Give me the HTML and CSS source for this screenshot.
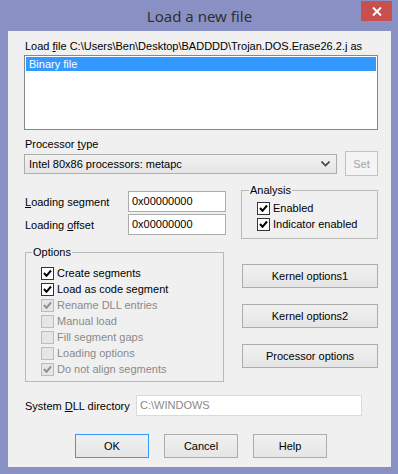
FILE: index.html
```html
<!DOCTYPE html>
<html lang="en">
<head>
    <meta charset="UTF-8">
    <title>Load a new file</title>
    <link rel="stylesheet" href="styles.css">
</head>
<body>
    <div class="window">
        <div class="titlebar">
            <span class="title">Load a new file</span>
            <div class="close-button">
                <svg width="10" height="9" viewBox="0 0 10 9"><path d="M1 0.5 L9 8.5 M9 0.5 L1 8.5" stroke="#fff" stroke-width="2"/></svg>
            </div>
        </div>
        <div class="client">
            <div class="caption">Load <u>f</u>ile C:\Users\Ben\Desktop\BADDDD\Trojan.DOS.Erase26.2.j as</div>
            <div class="listbox">
                <div class="list-item selected">Binary file</div>
            </div>

            <div class="caption proc-label">Processor <u>t</u>ype</div>
            <div class="proc-row">
                <div class="combo">
                    <span>Intel 80x86 processors: metapc</span>
                    <svg width="9" height="6" viewBox="0 0 9 6"><path d="M0.5 0.5 L4.5 4.5 L8.5 0.5" fill="none" stroke="#444" stroke-width="1.6"/></svg>
                </div>
                <button class="btn btn-small" disabled>Set</button>
            </div>

            <div class="middle">
                <div class="left-col">
                    <div class="field-row">
                        <span class="field-label"><u>L</u>oading segment</span>
                        <div class="textbox">0x00000000</div>
                    </div>
                    <div class="field-row">
                        <span class="field-label">Loading <u>o</u>ffset</span>
                        <div class="textbox">0x00000000</div>
                    </div>

                    <fieldset class="group options">
                        <legend>Options</legend>
                        <div class="check"><span class="box on"></span>Create segments</div>
                        <div class="check"><span class="box on"></span>Load as code segment</div>
                        <div class="check disabled"><span class="box on"></span>Rename DLL entries</div>
                        <div class="check disabled"><span class="box"></span>Manual load</div>
                        <div class="check disabled"><span class="box"></span>Fill segment gaps</div>
                        <div class="check disabled"><span class="box"></span>Loading options</div>
                        <div class="check disabled"><span class="box on"></span>Do not align segments</div>
                    </fieldset>
                </div>

                <div class="right-col">
                    <fieldset class="group analysis">
                        <legend>Analysis</legend>
                        <div class="check"><span class="box on"></span>Enabled</div>
                        <div class="check"><span class="box on"></span>Indicator enabled</div>
                    </fieldset>
                    <button class="btn btn-side">Kernel options1</button>
                    <button class="btn btn-side">Kernel options2</button>
                    <button class="btn btn-side">Processor options</button>
                </div>
            </div>

            <div class="dll-row">
                <span class="field-label">System <u>D</u>LL directory</span>
                <div class="textbox readonly">C:\WINDOWS</div>
            </div>

            <div class="button-row">
                <button class="btn btn-main default">OK</button>
                <button class="btn btn-main">Cancel</button>
                <button class="btn btn-main">Help</button>
            </div>
        </div>
    </div>
</body>
</html>
```

FILE: styles.css
```css
body {
    margin: 0;
    font-family: "Liberation Sans", Arial, sans-serif;
    font-size: 11px;
    color: #000;
}
u {
    text-decoration: underline;
    text-underline-offset: 1px;
}
.window {
    width: 398px;
    height: 474px;
    box-sizing: border-box;
    background: #8991c4;
    padding: 0 7px 7px 8px;
    display: flex;
    flex-direction: column;
    position: relative;
}
.titlebar {
    height: 31px;
    flex-shrink: 0;
    display: flex;
    align-items: center;
    justify-content: center;
}
.title {
    font-family: "Noto Sans", "Open Sans", sans-serif;
    font-size: 15px;
    color: #303030;
    margin-top: 1px;
}
.close-button {
    position: absolute;
    top: 1px;
    right: 6px;
    width: 31px;
    height: 20px;
    background: #c7504f;
    display: flex;
    align-items: center;
    justify-content: center;
}
.client {
    flex: 1;
    background: #f0f0f0;
    padding: 8px 13px 0 16px;
    box-sizing: border-box;
}
.caption {
    line-height: 14px;
    padding-left: 1px;
    white-space: nowrap;
}
.listbox {
    margin-top: 2px;
    height: 71px;
    border: 1px solid #828790;
    background: #fff;
    padding: 1px;
}
.list-item {
    height: 14px;
    line-height: 14px;
    padding-left: 3px;
}
.list-item.selected {
    background: #3399ff;
    color: #fff;
}
.proc-label {
    margin-top: 8px;
    line-height: 13px;
}
.proc-row {
    display: flex;
    align-items: center;
    height: 25px;
}
.combo {
    width: 314px;
    height: 20px;
    box-sizing: border-box;
    border: 1px solid #acacac;
    background: linear-gradient(#f2f2f2, #e5e5e5);
    display: flex;
    align-items: center;
    justify-content: space-between;
    padding: 0 6px 0 4px;
}
.btn {
    font-family: "Liberation Sans", Arial, sans-serif;
    font-size: 11px;
    color: #000;
    border: 1px solid #acacac;
    background: linear-gradient(#f0f0f0, #e5e5e5);
    box-sizing: border-box;
    padding: 0;
    margin: 0;
}
.btn:disabled {
    color: #a3a3a3;
    border-color: #c3c3c3;
    background: #f4f4f4;
}
.btn-small {
    width: 33px;
    height: 25px;
    margin-left: 8px;
}
.middle {
    display: flex;
    gap: 15px;
    margin-top: 8px;
}
.left-col {
    width: 202px;
}
.right-col {
    width: 137px;
    display: flex;
    flex-direction: column;
}
.field-row {
    display: flex;
    align-items: center;
    justify-content: space-between;
    margin-top: 2px;
    padding-left: 1px;
}
.field-row:first-child {
    margin-top: 7px;
}
.textbox {
    width: 98px;
    height: 21px;
    box-sizing: border-box;
    border: 1px solid #acacac;
    background: #fff;
    line-height: 19px;
    padding-left: 3px;
}
.group {
    border: 1px solid #b9b9b9;
    margin: 0;
    padding: 0;
}
.group legend {
    padding: 0 1px;
    line-height: 12px;
}
.options {
    margin: 11px 0 0 1px;
    width: 199px;
    box-sizing: border-box;
    padding: 7px 0 0 6px;
    height: 136px;
}
.options .check {
    margin-left: 9px;
}
.analysis {
    height: 55px;
    box-sizing: border-box;
    padding: 4px 0 0 7px;
}
.analysis .check {
    margin-left: 8px;
}
.check {
    display: flex;
    align-items: center;
    height: 16px;
    gap: 3px;
    white-space: nowrap;
}
.box {
    width: 13px;
    height: 13px;
    box-sizing: border-box;
    border: 1px solid #333;
    background: #fff;
    flex-shrink: 0;
}
.box.on {
    background: #fff url("data:image/svg+xml;utf8,<svg xmlns='http://www.w3.org/2000/svg' width='11' height='11'><path d='M2 5 L4.5 7.8 L9 2.5' fill='none' stroke='black' stroke-width='2'/></svg>") no-repeat center;
}
.disabled {
    color: #8a8a8a;
}
.disabled .box {
    border-color: #bcbcbc;
    background-color: #e6e6e6;
}
.disabled .box.on {
    background: #e6e6e6 url("data:image/svg+xml;utf8,<svg xmlns='http://www.w3.org/2000/svg' width='11' height='11'><path d='M2 5 L4.5 7.8 L9 2.5' fill='none' stroke='%23909090' stroke-width='2'/></svg>") no-repeat center;
}
.btn-side {
    width: 136px;
    height: 24px;
    margin-left: 1px;
    margin-top: 16px;
}
.right-col .btn-side:nth-of-type(1) {
    margin-top: 25px;
}
.dll-row {
    display: flex;
    align-items: center;
    margin-top: 13px;
    padding-left: 1px;
}
.dll-row .field-label {
    width: 111px;
}
.textbox.readonly {
    width: 226px;
    background: #fff;
    border-color: #dadada;
    color: #8a8a8a;
}
.button-row {
    display: flex;
    gap: 15px;
    margin-top: 18px;
    padding-left: 51px;
}
.btn-main {
    width: 74px;
    height: 24px;
}
.btn-main.default {
    border-color: #3399ff;
}
```
